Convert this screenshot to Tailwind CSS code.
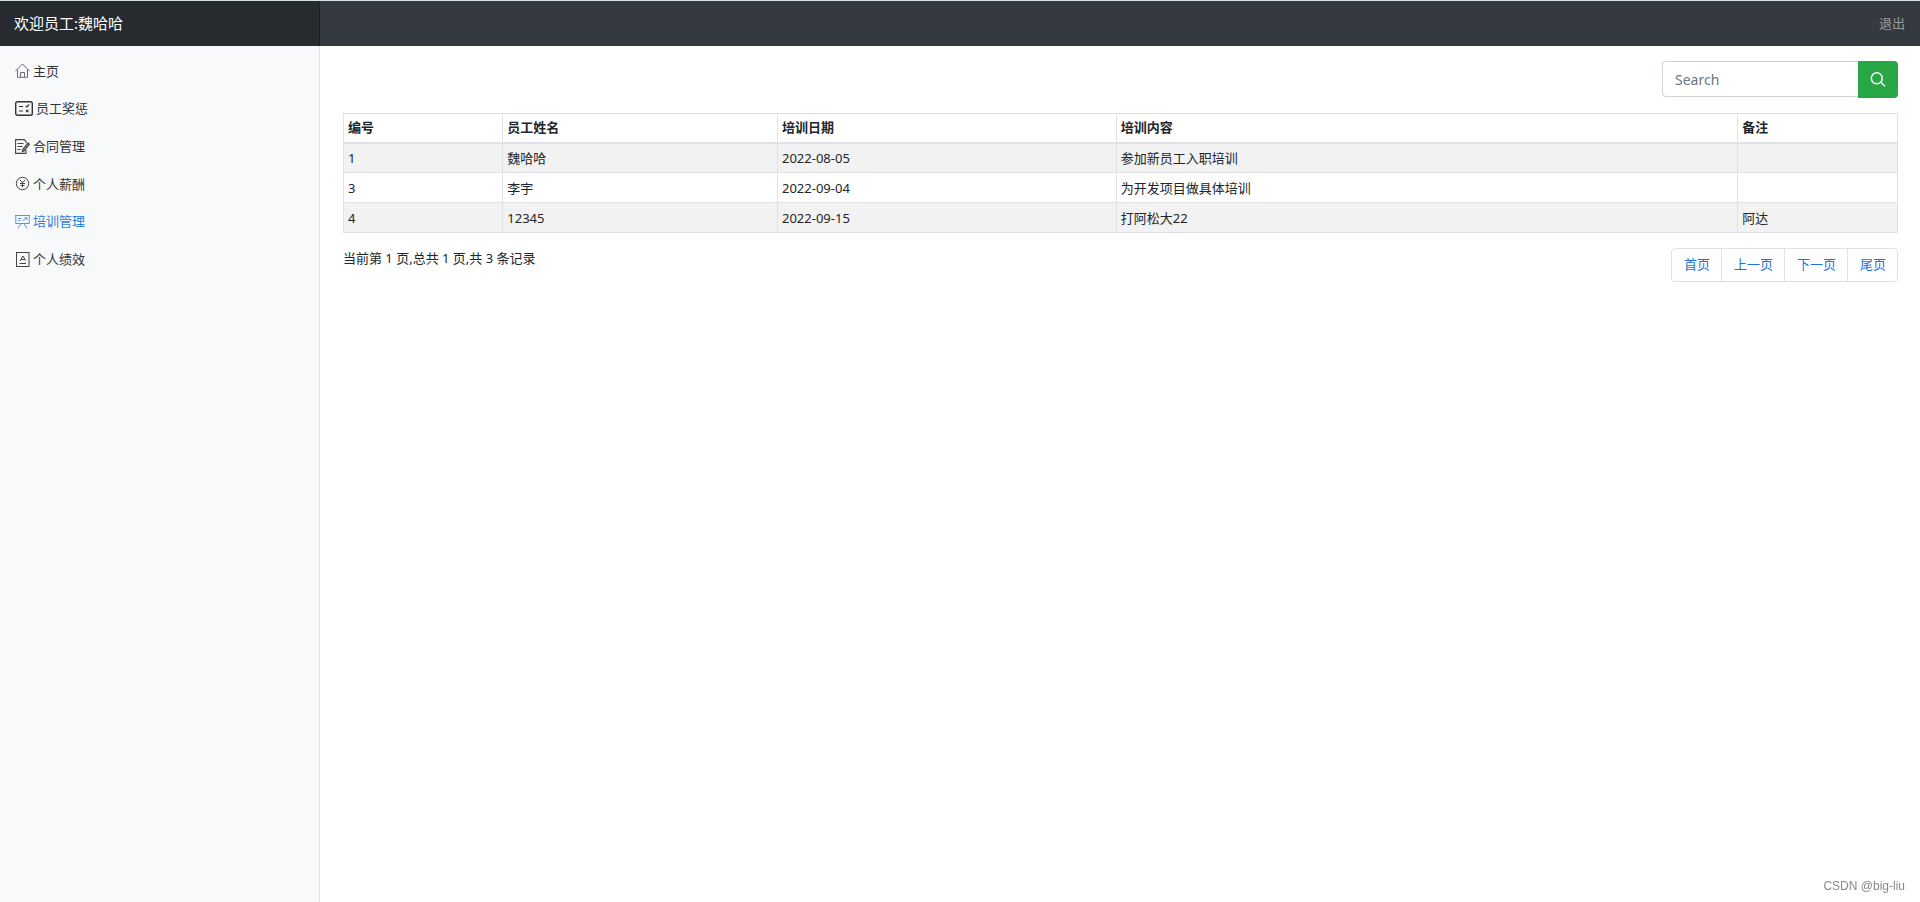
<!DOCTYPE html>
<html lang="zh-CN">
<head>
<meta charset="utf-8">
<title>培训管理</title>
<script src="https://cdn.jsdelivr.net/npm/@tailwindcss/browser@4"></script>
</head>
<body class="min-h-screen flex flex-col bg-white text-[#212529] text-[13px] leading-5 font-['Noto_Sans','Noto_Sans_CJK_SC',sans-serif]">
<header class="flex h-[46px] bg-[#343a40] border-t border-[#d5e0e2]">
  <a href="#" class="w-1/6 shrink-0 flex items-center pl-[14px] pb-[2px] text-[15px] text-white bg-black/25 shadow-[inset_-1px_0_0_rgba(0,0,0,0.25)]">欢迎员工:魏哈哈</a>
  <a href="#" class="ml-auto mr-[15px] pb-[2px] flex items-center text-white/50">退出</a>
</header>
<div class="flex flex-1">
  <nav class="w-1/6 shrink-0 bg-[#f8f9fa] border-r border-[#dfe1e3] pt-[6px]">
    <ul class="grid auto-rows-fr h-[226px] text-[#333]">
      <li><a href="#" class="flex items-center gap-[3px] h-full pl-[15px]">
        <svg class="w-[15px] h-[15px]" viewBox="0 0 15 15" fill="none" stroke="#666b75" stroke-width="1"><path d="M.4 8.200 7.500 1l7.100 7.200M2.500 6.500V14.300H12.500V6.500M5.500 14V9.500H9.500V14"/></svg>主页</a></li>
      <li><a href="#" class="flex items-center gap-[3px] h-full pl-[15px]">
        <svg class="w-[18px] h-[15px]" viewBox="0 0 18 15" fill="none" stroke="#333"><rect x=".7" y=".7" width="16.600" height="13.600" rx="1.800" stroke-width="1.400"/><path d="M4 5.500H8M4 10H8M10.500 4.800 11.800 6 14.200 3.500M11 8.800 13.600 11.200M13.600 8.800 11 11.200" stroke-width="1.100"/></svg>员工奖惩</a></li>
      <li><a href="#" class="flex items-center gap-[3px] h-full pl-[15px]">
        <svg class="w-[15px] h-[15px]" viewBox="0 0 15 15" fill="none" stroke="#444" stroke-width="1.100"><path d="M11 4V2.500L9.300.6H.6V14.400H11V11M2.500 4.500H8.500M2.500 7.500H7.500M2.500 10.500H5.500"/><path d="M12.800 4 14.500 5.300 9.300 11.900 7.400 12.700 7.600 10.700Z" fill="#888"/></svg>合同管理</a></li>
      <li><a href="#" class="flex items-center gap-[3px] h-full pl-[15px]">
        <svg class="w-[15px] h-[15px]" viewBox="0 0 15 15" fill="none" stroke="#444" stroke-width="1"><circle cx="7.500" cy="7.500" r="6.200"/><path d="M5 4 7.500 6.800 10 4M7.500 6.800V11.500M5 7.500H10M5.500 9.500H9.500"/></svg>个人薪酬</a></li>
      <li><a href="#" aria-current="page" class="flex items-center gap-[3px] h-full pl-[15px] text-[#2a7de1]">
        <svg class="w-[15px] h-[15px]" viewBox="0 0 15 15" fill="none" stroke="#5a96e0" stroke-width="1"><path d="M0 1.500H15M.8 1.500V9.500H14.200V1.500M6 9.500 3 14.200M9 9.500 12 14.200M3 4.500H6.500M3 6.500H5.500M7.500 6.800 11.500 4M9.500 3.700H11.800V6"/></svg>培训管理</a></li>
      <li><a href="#" class="flex items-center gap-[3px] h-full pl-[15px]">
        <svg class="w-[15px] h-[15px]" viewBox="0 0 15 15" fill="none" stroke="#444" stroke-width="1"><rect x="1.500" y=".5" width="12.500" height="14"/><path d="M4.500 11.500H11M5 9 8 4 10.500 8.500M6 7.500H10"/></svg>个人绩效</a></li>
    </ul>
  </nav>
  <main class="flex-1 min-w-0 pt-[15px] pl-[23px] pr-[22px]">
    <form class="flex justify-end mb-[15px]">
      <input type="search" aria-label="Search" placeholder="Search" class="w-[196px] h-9 border border-r-0 border-[#ced4da] rounded-l px-3 text-sm placeholder:text-[#6c757d] outline-none">
      <button type="button" aria-label="搜索" class="w-10 h-[37px] rounded-r bg-[#28a745] flex items-center justify-center">
        <svg class="w-4 h-4" viewBox="0 0 16 16" fill="none" stroke="#fff" stroke-width="1.500"><circle cx="6.800" cy="6.300" r="5.500"/><path d="M10.800 10.300 15 14.300"/></svg>
      </button>
    </form>
    <table class="w-full table-fixed border-collapse border border-[#dee2e6] text-left [&_th]:border [&_td]:border [&_th]:border-[#dee2e6] [&_td]:border-[#dee2e6] [&_th]:px-1 [&_td]:px-1 [&_th]:pb-[2px] [&_th]:h-[29px] [&_td]:h-[30px]">
      <colgroup><col class="w-[10.250%]"><col class="w-[17.680%]"><col class="w-[21.800%]"><col class="w-[40%]"><col></colgroup>
      <thead><tr class="border-b-2 border-[#dee2e6]"><th>编号</th><th>员工姓名</th><th>培训日期</th><th>培训内容</th><th>备注</th></tr></thead>
      <tbody>
        <tr class="bg-[#f2f2f2]"><td>1</td><td>魏哈哈</td><td>2022-08-05</td><td>参加新员工入职培训</td><td></td></tr>
        <tr><td>3</td><td>李宇</td><td>2022-09-04</td><td>为开发项目做具体培训</td><td></td></tr>
        <tr class="bg-[#f2f2f2]"><td>4</td><td>12345</td><td>2022-09-15</td><td>打阿松大22</td><td>阿达</td></tr>
      </tbody>
    </table>
    <div class="flex justify-between items-start mt-[15px]">
      <p>当前第 1 页,总共 1 页,共 3 条记录</p>
      <nav aria-label="分页" class="flex h-[34px] border border-[#dee2e6] rounded divide-x divide-[#dee2e6] text-[#1a73d9]">
        <a href="#" class="flex items-center pl-3 pr-[11px] pb-[2px]">首页</a>
        <a href="#" class="flex items-center pl-3 pr-[11px] pb-[2px]">上一页</a>
        <a href="#" class="flex items-center pl-3 pr-[11px] pb-[2px]">下一页</a>
        <a href="#" class="flex items-center pl-3 pr-[11px] pb-[2px]">尾页</a>
      </nav>
    </div>
  </main>
</div>
<div class="fixed right-[15px] bottom-2 text-xs leading-4 text-[#888] font-['Liberation_Sans',sans-serif]">CSDN @big-liu</div>
</body>
</html>
